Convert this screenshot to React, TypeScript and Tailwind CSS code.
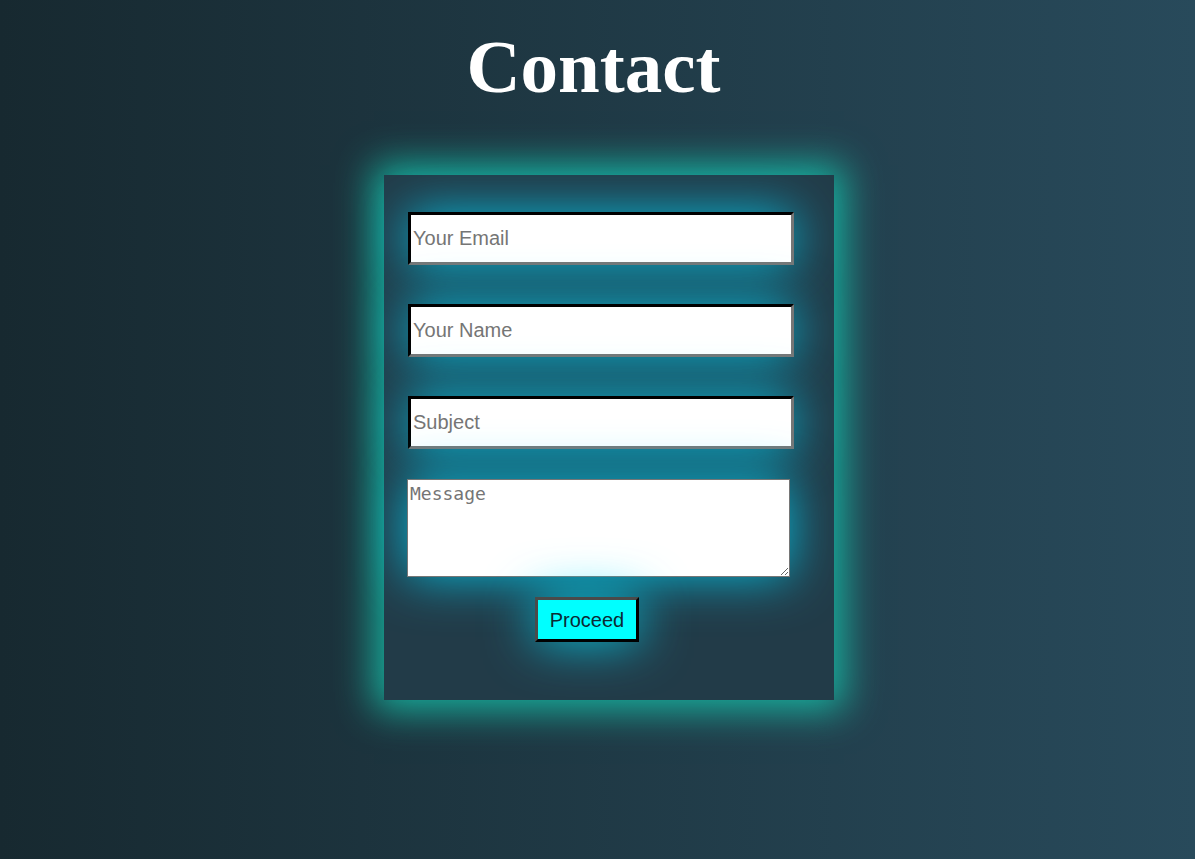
import React from "react";

export default function App() {
  const inputCls =
    "block w-[386px] h-[53px] bg-white border-[3px] [border-style:inset] border-t-[#222] border-l-[#222] border-b-[#767676] border-r-[#767676] pl-[2px] pr-[3px] text-[20px] text-black placeholder:text-[#757575] outline-none shadow-[0_0_50px_rgba(0,215,250,0.8)] [font-family:'Liberation_Sans',Arial,sans-serif]";
  return (
    <div className="min-h-[859px] w-full bg-[linear-gradient(to_right,#172930,#284a5b)] flex flex-col [font-family:'Liberation_Sans',Arial,sans-serif]">
      <h1 className="text-white font-bold text-[75px] leading-none text-center mt-[29px] pr-[8px] [font-family:'Liberation_Serif','Times_New_Roman',serif]">
        Contact
      </h1>
      <div className="ml-[384px] mt-[71px] w-[450px] h-[525px] bg-[#223b48] shadow-[0_0_36px_10px_rgba(22,200,175,0.85)] pt-[37px] pl-[24px]">
        <input className={inputCls} placeholder="Your Email" />
        <input className={inputCls + " mt-[39px]"} placeholder="Your Name" />
        <input className={inputCls + " mt-[39px]"} placeholder="Subject" />
        <textarea
          className="block mt-[30px] -ml-[1px] w-[383px] h-[98px] bg-white border border-[#767676] pt-[3px] px-[2px] text-[18px] leading-[22px] text-black placeholder:text-[#757575] outline-none shadow-[0_0_50px_rgba(0,215,250,0.8)] [font-family:'DejaVu_Sans_Mono',monospace]"
          placeholder="Message"
        />
        <button className="block ml-[127px] mt-[20px] w-[104px] h-[45px] bg-[#00ffff] border-[3px] [border-style:outset] border-t-[#4a4a4a] border-l-[#4a4a4a] border-b-black border-r-black text-[20px] text-[#0c2a33] shadow-[0_0_50px_rgba(0,225,255,0.8)] [font-family:'Liberation_Sans',Arial,sans-serif]">
          Proceed
        </button>
      </div>
    </div>
  );
}
